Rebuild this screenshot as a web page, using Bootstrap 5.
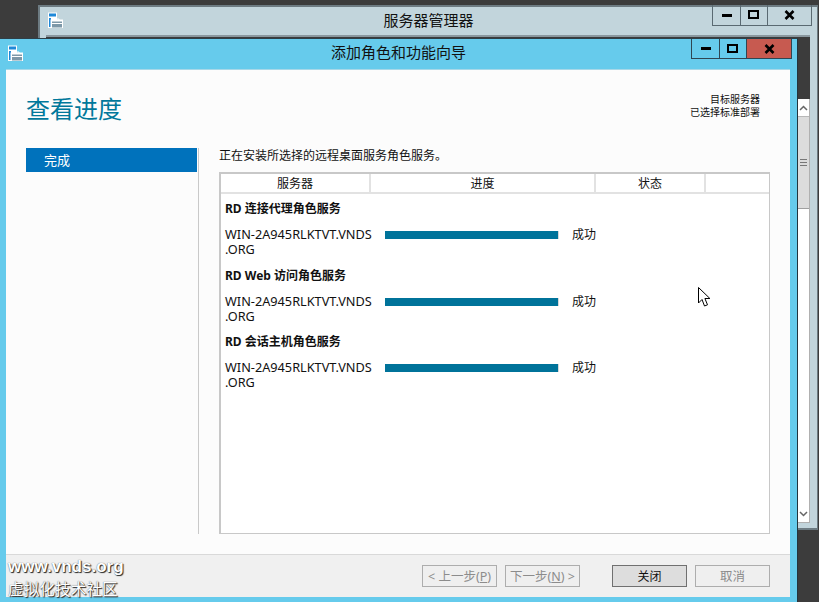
<!DOCTYPE html>
<html lang="zh-CN">
<head>
<meta charset="utf-8">
<title>添加角色和功能向导</title>
<link rel="stylesheet" href="https://cdn.jsdelivr.net/npm/bootstrap@5.3.0/dist/css/bootstrap.min.css">
<style>
html,body{margin:0;height:100%;}
body{background:#3c3c3c;font-family:"Noto Sans","Noto Sans CJK SC",sans-serif;font-size:12px;line-height:15px;color:#111;overflow:hidden;}
.desk{position:relative;width:819px;height:602px;overflow:hidden;}
.win-back{position:absolute;left:38px;top:5px;width:780px;height:525px;background:#c2d5dc;border:2px solid #6d7b82;border-right-width:1px;}
.win-front{position:absolute;left:0;top:38px;width:798px;height:564px;background:#66cbec;border-top:1px solid #2e3f48;border-right:1px solid #23343d;}
.bar-title{height:30px;position:relative;font-size:15px;line-height:26px;color:#111;text-align:center;flex:none;}
.win-back .bar-title{height:28px;line-height:27px;}
.app-ico{position:absolute;width:16px;height:16px;}
.win-back .app-ico{left:7px;top:5px;}
.win-front .app-ico{left:7px;top:6px;}
.ctrls{position:absolute;top:-1px;display:flex;height:21px;border:1px solid #5a6a72;border-top:0;}
.win-back .ctrls{right:5px;top:-2px;width:100px;}
.win-front .ctrls{right:5px;top:0;width:101px;height:20px;border-color:#2f4653;}
.ctrl{display:flex;align-items:center;justify-content:center;border-left:1px solid #5a6a72;width:27px;flex:none;}
.win-front .ctrl{border-left-color:#2f4653;}
.ctrl:first-child{border-left:0;}
.ctrl.wide{flex:1;}
.ctrl.red{background:#c75a50;}
.back-client{position:absolute;left:6px;top:28px;right:7px;bottom:5px;background:#3c3c3c;border-top:2px solid #8a989f;padding-top:62px;}
.scroller{width:12px;height:100%;margin-left:auto;background:#fff;border-right:1px solid #b0b0b0;border-bottom:1px solid #b0b0b0;}
.arrow-box{height:17px;background:#fff;display:flex;align-items:center;justify-content:center;flex:none;}
.thumb{height:93px;background:#dcdcdc;border-top:1px solid #b8b8b8;border-bottom:1px solid #a0a0a0;display:flex;align-items:center;justify-content:center;flex:none;}
.grip{width:7px;height:7px;border-top:1px solid #777;border-bottom:1px solid #777;position:relative;}
.grip::after{content:"";position:absolute;left:0;right:0;top:2px;height:1px;background:#777;}
.client{position:absolute;left:6px;top:30px;width:784px;height:528px;background:#fcfcfc;border-top:1px solid #a8d8e8;}
.page-head{height:78px;padding:24px 30px 0 20px;flex:none;}
.page-title{font-size:24px;line-height:30px;color:#00789b;margin:0;font-weight:400;letter-spacing:0;}
.target{font-size:10px;line-height:13px;text-align:right;color:#111;margin-top:-1px;}
.content-wrap{height:386px;flex:none;}
.side{width:173px;margin-left:20px;border-right:1px solid #c9c9c9;flex:none;}
.side-item{width:171px;height:24px;line-height:24px;background:#0072bc;color:#fff;padding-left:18px;font-size:13px;}
.main-pane{padding-left:20px;width:571px;flex:none;}
.intro{height:24px;line-height:16px;flex:none;}
.grid-box{flex:1;background:#fff;border:1px solid #c8c8c8;border-top:2px solid #c8c8c8;border-left:2px solid #c8c8c8;min-height:0;}
.grid-head{height:20px;border-bottom:2px solid #e2e2e2;flex:none;}
.grid-head>div{text-align:center;line-height:20px;font-size:12px;border-right:2px solid #e2e2e2;flex:none;}
.h1c{width:150px;}.h2c{width:225px;}.h3c{width:110px;}.h4c{flex:1 !important;border-right:0 !important;}
.grid-body{padding:6px 0 0 4px;}
.grp{margin-bottom:9.5px;}
.grp-title{height:18px;line-height:18px;font-weight:700;font-size:12px;margin-bottom:9px;}
.srv{width:160px;flex:none;line-height:15px;font-size:12.72px;}
.track{width:174px;height:8px;margin-top:4px;background:#d8d8d8;flex:none;}
.fill{width:173px;height:8px;background:#00739a;}
.stat{margin-left:13px;line-height:15px;}
.foot{height:43px;margin-top:20px;border-top:1px solid #d9d9d9;background:#f0f0f0;padding:10px 20px 0 0;flex:none;}
.wbtn{width:75px;height:22px;padding:0;border-radius:0;font-size:12.5px;line-height:19px;flex:none;}
.wbtn.btn:disabled,.wbtn.btn.disabled{background:#efefef;border:1px solid #adadad;color:#8c8c8c;opacity:1;}
.wbtn.main-btn{background:#dddddd;border:1px solid #707070;color:#111;font-size:12px;}
.ml8{margin-left:8px;}.ml32{margin-left:32px;}
.wm{position:absolute;left:8px;color:#fff;text-shadow:1px 1px 1px #222,0 0 1px #444;white-space:nowrap;}
.wm-a{top:556px;font-size:17px;line-height:22px;font-family:"Liberation Sans",sans-serif;font-weight:700;}
.wm-b{top:580px;font-size:15.7px;line-height:18px;font-weight:400;}
.cursor{position:absolute;left:698px;top:287px;}
</style>
</head>
<body>
<div class="desk">
  <div class="win-back">
    <div class="bar-title">
      <svg class="app-ico" viewBox="0 0 16 16"><path d="M1 .5h9v16H1z" fill="#fff"/><path d="M2 1.500h7v3H2zM2 6h2v9H2z" fill="#1e88d8"/><path d="M3.500 7.500h13v9h-13z" fill="#fff"/><path d="M5 9.500h10v6H5z" fill="#7d98a8"/><path d="M8 9V7h4v2" fill="none" stroke="#fff"/><path d="M5 11.500h10" stroke="#fff"/></svg>
      服务器管理器
      <div class="ctrls">
        <div class="ctrl"><svg width="12" height="5"><rect x="1" y="1" width="10" height="3" fill="#000"/></svg></div>
        <div class="ctrl"><svg width="12" height="10"><rect x="1" y="1" width="9" height="7" fill="none" stroke="#000" stroke-width="2"/></svg></div>
        <div class="ctrl wide"><svg width="11" height="10"><path d="M1.500 1l8 8M9.500 1l-8 8" stroke="#000" stroke-width="2.600"/></svg></div>
      </div>
    </div>
    <div class="back-client">
      <div class="scroller d-flex flex-column">
        <div class="arrow-box"><svg width="9" height="6"><path d="M1 5l3.500-3.500L8 5" fill="none" stroke="#666" stroke-width="1.500"/></svg></div>
        <div class="thumb"><div class="grip"></div></div>
        <div class="flex-grow-1"></div>
        <div class="arrow-box"><svg width="9" height="6"><path d="M1 1l3.500 3.500L8 1" fill="none" stroke="#666" stroke-width="1.500"/></svg></div>
      </div>
    </div>
  </div>

  <div class="win-front">
    <div class="bar-title">
      <svg class="app-ico" viewBox="0 0 16 16"><path d="M1 .5h9v16H1z" fill="#fff"/><path d="M2 1.500h7v3H2zM2 6h2v9H2z" fill="#1e88d8"/><path d="M3.500 7.500h13v9h-13z" fill="#fff"/><path d="M5 9.500h10v6H5z" fill="#7d98a8"/><path d="M8 9V7h4v2" fill="none" stroke="#fff"/><path d="M5 11.500h10" stroke="#fff"/></svg>
      添加角色和功能向导
      <div class="ctrls">
        <div class="ctrl"><svg width="12" height="5"><rect x="1" y="1" width="10" height="3" fill="#000"/></svg></div>
        <div class="ctrl"><svg width="12" height="10"><rect x="1" y="1" width="9" height="7" fill="none" stroke="#000" stroke-width="2"/></svg></div>
        <div class="ctrl wide red"><svg width="11" height="10"><path d="M1.500 1l8 8M9.500 1l-8 8" stroke="#000" stroke-width="2.600"/></svg></div>
      </div>
    </div>
    <div class="client d-flex flex-column">
      <div class="page-head d-flex justify-content-between">
        <h1 class="page-title">查看进度</h1>
        <div class="target">目标服务器<br>已选择标准部署</div>
      </div>
      <div class="content-wrap d-flex">
        <div class="side"><div class="side-item">完成</div></div>
        <div class="main-pane d-flex flex-column">
          <div class="intro">正在安装所选择的远程桌面服务角色服务。</div>
          <div class="grid-box d-flex flex-column">
            <div class="grid-head d-flex">
              <div class="h1c">服务器</div><div class="h2c">进度</div><div class="h3c">状态</div><div class="h4c"></div>
            </div>
            <div class="grid-body">
              <div class="grp">
                <div class="grp-title">RD 连接代理角色服务</div>
                <div class="d-flex"><div class="srv">WIN-2A945RLKTVT.VNDS<br>.ORG</div><div class="track"><div class="fill"></div></div><div class="stat">成功</div></div>
              </div>
              <div class="grp">
                <div class="grp-title">RD Web 访问角色服务</div>
                <div class="d-flex"><div class="srv">WIN-2A945RLKTVT.VNDS<br>.ORG</div><div class="track"><div class="fill"></div></div><div class="stat">成功</div></div>
              </div>
              <div class="grp">
                <div class="grp-title">RD 会话主机角色服务</div>
                <div class="d-flex"><div class="srv">WIN-2A945RLKTVT.VNDS<br>.ORG</div><div class="track"><div class="fill"></div></div><div class="stat">成功</div></div>
              </div>
            </div>
          </div>
        </div>
      </div>
      <div class="foot d-flex justify-content-end">
        <button class="btn wbtn" disabled>&lt; 上一步(<u>P</u>)</button>
        <button class="btn wbtn ml8" disabled>下一步(<u>N</u>) &gt;</button>
        <button class="btn wbtn main-btn ml32">关闭</button>
        <button class="btn wbtn ml8" disabled>取消</button>
      </div>
    </div>
  </div>

  <svg class="cursor" width="13" height="22" viewBox="0 0 13 22"><path d="M.5.500v15.500l3.500-3.500 2.500 6.500 3-1.200-2.600-6.300h5z" fill="#fff" stroke="#000"/></svg>
  <div class="wm wm-a">www.vnds.org</div>
  <div class="wm wm-b">虚拟化技术社区</div>
</div>
<script src="https://cdn.jsdelivr.net/npm/bootstrap@5.3.0/dist/js/bootstrap.bundle.min.js"></script>
</body>
</html>
